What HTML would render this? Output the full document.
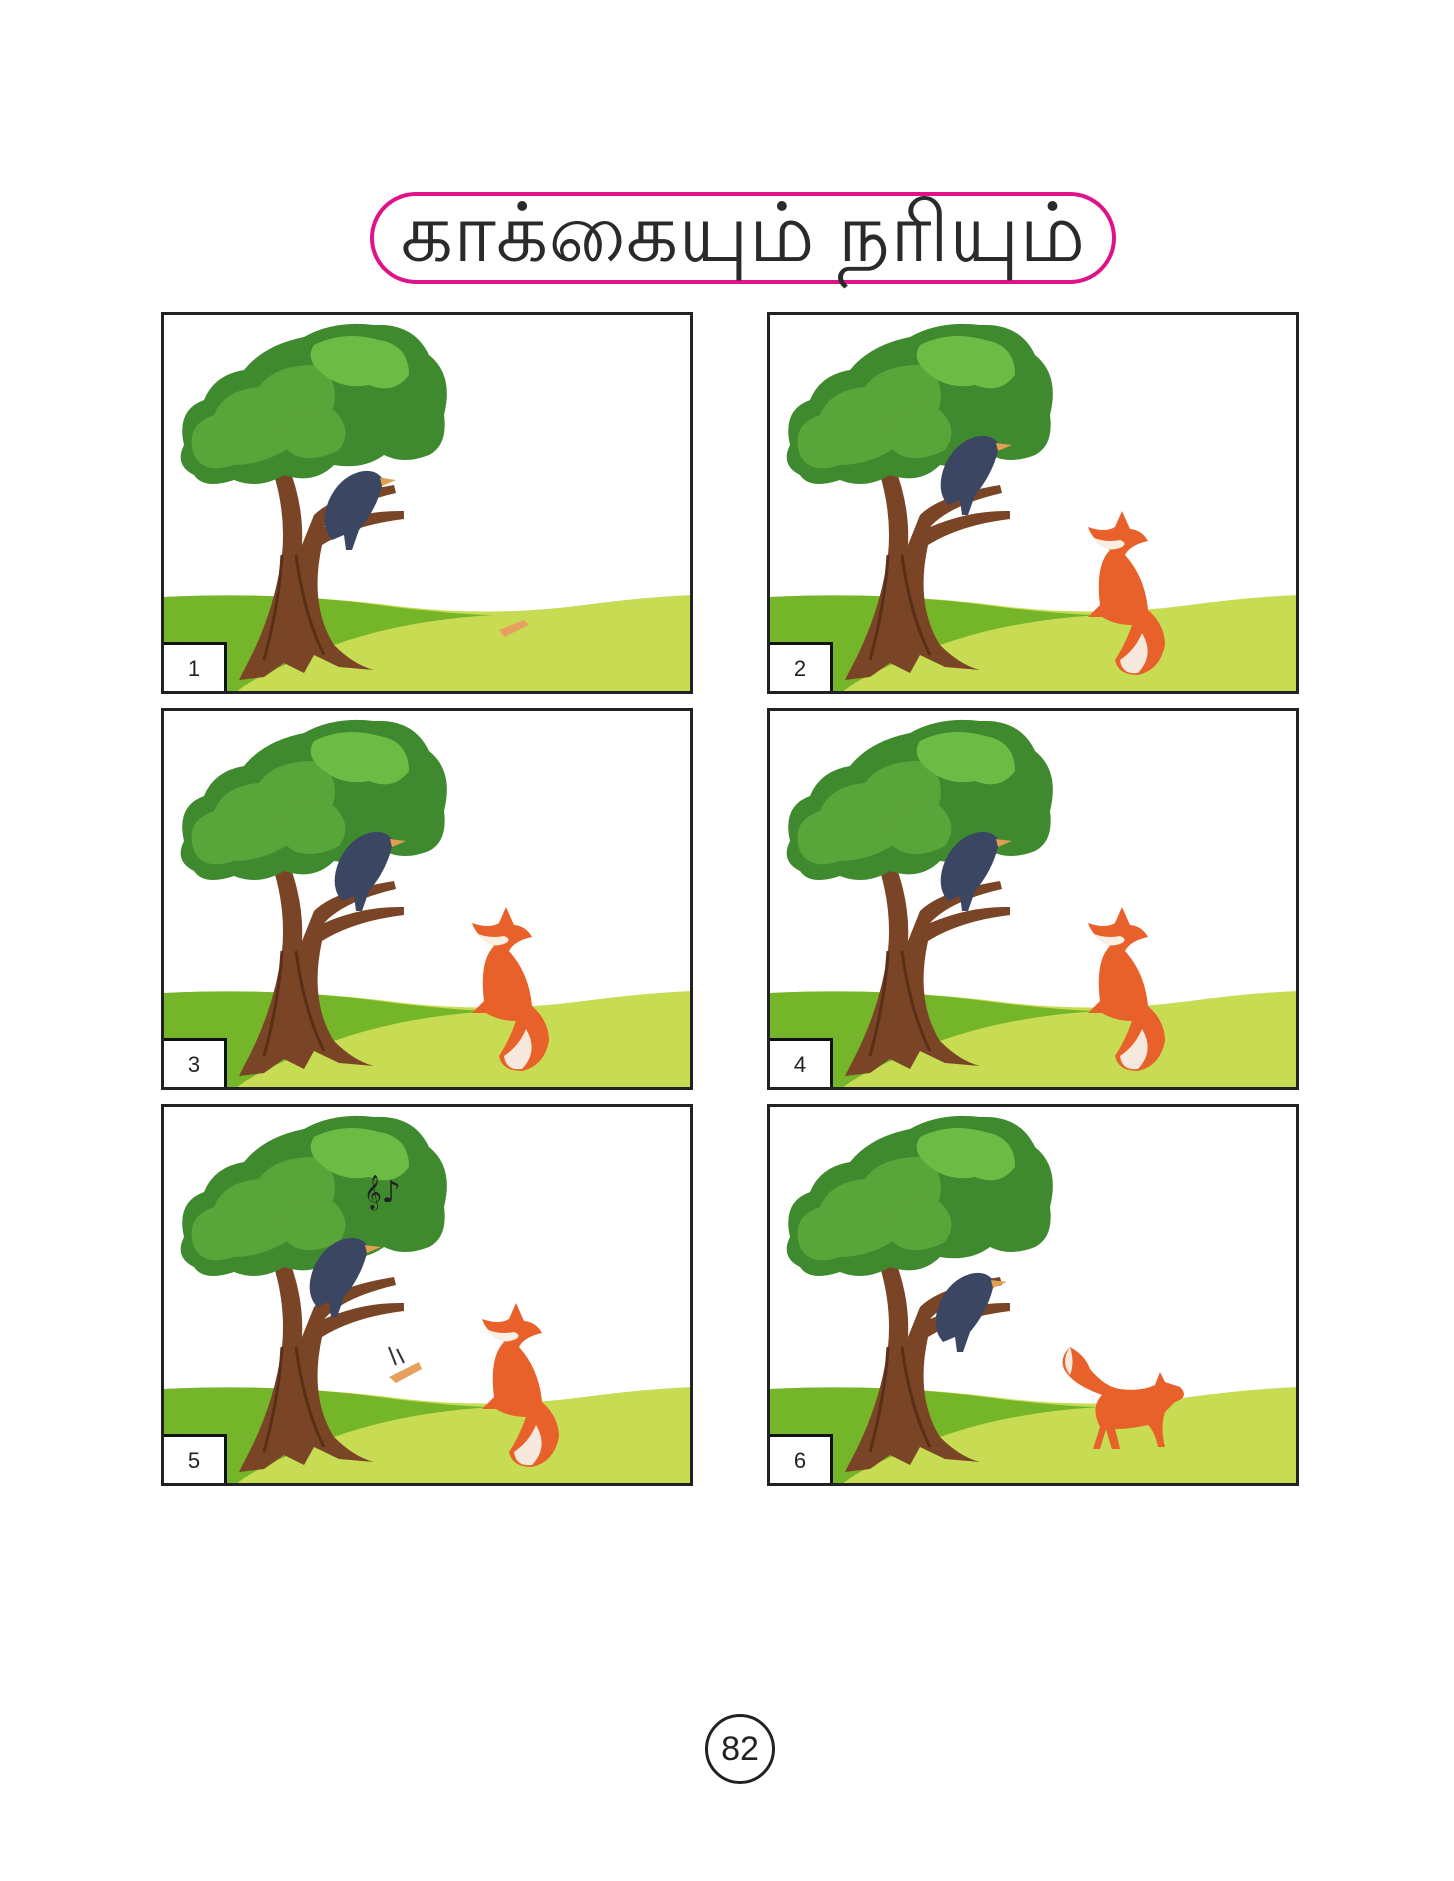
<!DOCTYPE html>
<html><head><meta charset="utf-8"><style>
html,body{margin:0;padding:0;background:#fff;}
body{width:1454px;height:1881px;position:relative;overflow:hidden;font-family:"Liberation Sans",sans-serif;}
.title{position:absolute;left:370px;top:192px;width:746px;height:92px;border:4px solid #e0128a;border-radius:46px;box-sizing:border-box;text-align:center;font-family:"Liberation Sans","Noto Sans CJK SC",sans-serif;font-size:82px;line-height:76px;color:#2a2a2a;white-space:nowrap;}
.panel{position:absolute;width:532px;height:382px;border:3px solid #222;box-sizing:border-box;overflow:hidden;background:#fff;}
.panel svg{position:absolute;left:0;top:0;}
.num{position:absolute;left:-3px;bottom:-3px;width:66px;height:52px;border:3px solid #111;background:#fff;box-sizing:border-box;font-size:22px;line-height:48px;text-align:center;color:#222;}
.pg{position:absolute;left:705px;top:1714px;width:70px;height:70px;border:3px solid #222;border-radius:50%;box-sizing:border-box;text-align:center;line-height:64px;font-size:34px;color:#222;}
</style></head><body>
<svg width="0" height="0" style="position:absolute">
<defs>
<g id="scene">
<path d="M0 282 Q120 276 240 292 Q330 302 420 290 Q480 282 528 280 L528 379 L0 379 Z" fill="#c7dc52"/>
<path d="M0 282 Q120 276 230 292 Q300 300 330 300 Q240 305 170 330 Q90 360 70 379 L0 379 Z" fill="#74b52a"/>
<path d="M80 355 Q110 300 118 240 Q122 200 110 160 L124 150 Q140 190 138 230 L150 200 Q170 180 230 170 L232 178 Q180 190 160 212 Q200 195 240 196 L240 204 Q190 210 158 230 Q145 290 170 330 Q190 350 210 355 L175 352 L150 340 L140 358 L120 348 L100 362 L75 365 Z" fill="#7a4526"/>
<path d="M118 240 Q115 290 100 345 M132 240 Q140 300 160 340" stroke="#5a2f18" stroke-width="3" fill="none"/>
<path d="M118 160 Q100 150 95 140 M135 150 Q150 140 160 130" stroke="#7a4526" stroke-width="6" fill="none"/>
<path d="M20 130 Q12 95 40 85 Q50 60 80 55 Q100 30 140 22 Q170 5 210 10 Q250 8 265 40 Q290 60 280 100 Q284 130 265 140 Q240 150 220 140 Q200 155 170 150 Q150 170 120 160 Q95 175 70 165 Q40 175 30 160 Q10 150 20 130 Z" fill="#3f8a2e"/>
<path d="M30 140 Q20 110 50 100 Q60 75 95 72 Q110 50 150 50 Q175 60 170 90 Q160 120 130 130 Q100 150 70 150 Q40 160 30 140 Z" fill="#5aa53a"/>
<path d="M150 30 Q180 15 215 25 Q245 30 245 60 Q230 80 205 70 Q180 75 160 60 Q140 45 150 30 Z" fill="#6cbb44"/>
<path d="M120 110 Q140 85 170 95 Q190 115 175 135 Q150 148 130 140 Q110 128 120 110 Z" fill="#5aa53a"/>
</g>
<g id="crow"><path d="M178 190 Q165 175 175 150 Q185 128 205 122 Q220 118 228 128 L240 130 L228 136 Q222 160 205 180 L198 200 L192 200 L190 185 Z" fill="#3b4662"/><path d="M226 128 L242 130 L228 136 Z" fill="#e0a050"/></g>
<g id="fox"><path d="M330 290 Q325 250 340 235 Q322 225 318 212 Q335 218 345 212 L352 196 L360 214 Q372 215 378 226 Q360 230 355 240 Q375 262 378 295 Q395 310 395 330 Q390 355 368 360 Q348 360 345 345 Q355 330 362 310 Q345 310 332 302 L318 302 Z" fill="#e8602a"/><path d="M350 345 Q365 335 372 318 Q385 340 368 358 Q352 360 350 345 Z" fill="#f6e8dc"/><path d="M322 222 Q335 240 352 232 Q358 228 350 225 Q335 228 322 222 Z" fill="#fbeee2"/></g>
<g id="fox6"><path d="M330 320 Q320 300 332 288 Q310 280 300 270 Q285 255 300 240 Q315 248 320 262 Q335 280 350 282 Q370 285 385 278 L390 265 L395 275 L410 280 Q420 290 405 295 L395 305 Q390 320 395 340 L388 340 Q385 325 378 318 Q360 322 345 322 Q348 332 350 342 L342 342 Q338 330 336 322 L330 342 L323 342 Z" fill="#e8602a"/><path d="M300 240 Q290 255 300 268 Q305 255 300 240 Z" fill="#f6e8dc"/></g>
</defs></svg>

<div class="title">காக்கையும் நரியும்</div>

<div class="panel" style="left:161px;top:312px"><svg width="528" height="379"><use href="#scene"/><g transform="translate(-10,35)"><use href="#crow"/></g><path d="M335 315 L360 305 L365 310 L340 322 Z" fill="#e8a060"/></svg><div class="num">1</div></div>
<div class="panel" style="left:767px;top:312px"><svg width="528" height="379"><use href="#scene"/><use href="#crow"/><use href="#fox"/></svg><div class="num">2</div></div>
<div class="panel" style="left:161px;top:708px"><svg width="528" height="379"><use href="#scene"/><use href="#crow"/><g transform="translate(-10,0)"><use href="#fox"/></g></svg><div class="num">3</div></div>
<div class="panel" style="left:767px;top:708px"><svg width="528" height="379"><use href="#scene"/><use href="#crow"/><use href="#fox"/></svg><div class="num">4</div></div>
<div class="panel" style="left:161px;top:1104px"><svg width="528" height="379"><use href="#scene"/><g transform="translate(-25,10)"><use href="#crow"/></g><text x="200" y="95" font-size="30" fill="#222" font-family="DejaVu Sans">𝄞♪</text><path d="M225 240 L232 258 M233 242 L240 256" stroke="#333" stroke-width="2"/><path d="M225 270 L255 255 L258 262 L232 276 Z" fill="#e8a060"/><use href="#fox"/></svg><div class="num">5</div></div>
<div class="panel" style="left:767px;top:1104px"><svg width="528" height="379"><use href="#scene"/><g transform="translate(-5,45)"><use href="#crow"/></g><use href="#fox6"/></svg><div class="num">6</div></div>

<div class="pg">82</div>
</body></html>
